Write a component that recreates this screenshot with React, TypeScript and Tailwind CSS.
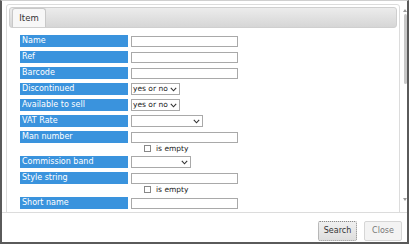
import React from "react";

type Row =
  | { kind: "text"; label: string; empty?: boolean }
  | { kind: "select"; label: string; width: string; value?: string };

const rows: Row[] = [
  { kind: "text", label: "Name" },
  { kind: "text", label: "Ref" },
  { kind: "text", label: "Barcode" },
  { kind: "select", label: "Discontinued", width: "w-[49px]", value: "yes or no" },
  { kind: "select", label: "Available to sell", width: "w-[49px]", value: "yes or no" },
  { kind: "select", label: "VAT Rate", width: "w-[72px]" },
  { kind: "text", label: "Man number", empty: true },
  { kind: "select", label: "Commission band", width: "w-[60px]" },
  { kind: "text", label: "Style string", empty: true },
  { kind: "text", label: "Short name" },
];

function Chevron() {
  return (
    <svg width="7" height="5" viewBox="0 0 7 5" className="shrink-0">
      <path d="M0.8 0.8 L3.5 3.8 L6.2 0.8" fill="none" stroke="#333" strokeWidth="1.1" />
    </svg>
  );
}

function FieldRow({ row }: { row: Row }) {
  return (
    <div className="flex flex-col">
      <div className="flex items-center gap-[3px] h-[12px]">
        <div className="w-[108px] h-[12px] bg-[#3a93dd] text-white text-[8px] leading-none pl-[2px] flex items-center">
          {row.label}
        </div>
        {row.kind === "text" ? (
          <div className="w-[107px] h-[11px] border border-[#a9a9a9] bg-white" />
        ) : (
          <div
            className={`${row.width} h-[12px] border border-[#a9a9a9] bg-white flex items-center justify-between pl-[1px] pr-[2px] text-[7.5px] leading-none text-[#222]`}
          >
            <span>{row.value ?? ""}</span>
            <Chevron />
          </div>
        )}
      </div>
      {row.kind === "text" && row.empty && (
        <div className="flex items-center h-[9px] mt-[1px] -mb-[1px] pl-[124px] gap-[5px] text-[7.5px] leading-none text-[#222]">
          <div className="w-[7px] h-[7px] border border-[#888] bg-white" />
          <span>is empty</span>
        </div>
      )}
    </div>
  );
}

export default function App() {
  return (
    <div className="w-[413px] h-[249px] bg-white" style={{ fontFamily: '"DejaVu Sans", Verdana, sans-serif' }}>
      <div className="w-[409px] h-[244px] border-l-2 border-r-2 border-b-2 border-[#5a5a5a] border-t border-t-[#cfcfcf] flex flex-col">
        <div className="flex h-[211px] overflow-hidden">
          <div className="pl-[4px] pt-[3px] w-[398px]">
            <div className="h-[220px] border border-[#dcdcdc] rounded-t-[3px] p-[2px] bg-white">
              <div className="h-[21px] rounded-[3px] border border-[#cfcfcf] bg-gradient-to-b from-[#ececec] to-[#d6d6d6] flex items-end pl-[2px]">
                <div className="w-[34px] h-[19px] border border-b-0 border-[#c8c8c8] rounded-t-[3px] bg-[#f7f7f7] text-[8.5px] text-[#333] flex items-center justify-center">
                  Item
                </div>
              </div>
              <div className="pl-[11px] pt-[7px] flex flex-col gap-[4px]">
                {rows.map((r) => (
                  <FieldRow key={r.label} row={r} />
                ))}
              </div>
            </div>
          </div>
          <div className="ml-[3px] mt-[8px] w-[4px] h-[192px] flex flex-col items-center">
            <div className="w-0 h-0 border-l-[2px] border-r-[2px] border-b-[3px] border-l-transparent border-r-transparent border-b-[#999]" />
            <div className="w-[3px] h-[70px] bg-[#c8c8c8] mt-[2px] rounded-full" />
            <div className="flex-1" />
            <div className="w-0 h-0 border-l-[2px] border-r-[2px] border-t-[3px] border-l-transparent border-r-transparent border-t-[#999]" />
          </div>
        </div>
        <div className="flex-1 border-t border-[#dcdcdc] flex items-start justify-end gap-[7px] pt-[8px] pr-[5px]">
          <button className="w-[39px] h-[20px] border border-dotted border-[#8a8a8a] rounded-[2px] bg-gradient-to-b from-[#f0f0f0] to-[#dedede] text-[8px] text-[#333]">
            Search
          </button>
          <button className="w-[38px] h-[20px] border border-[#d6d6d6] rounded-[2px] bg-[#f3f3f3] text-[8px] text-[#777]">
            Close
          </button>
        </div>
      </div>
    </div>
  );
}
